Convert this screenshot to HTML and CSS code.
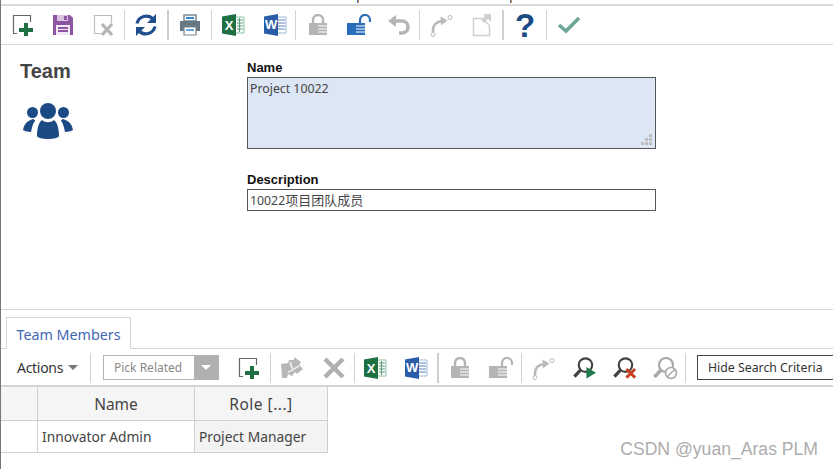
FILE: index.html
```html
<!DOCTYPE html>
<html lang="en">
<head>
<meta charset="utf-8">
<title>Team</title>
<link rel="stylesheet" href="styles.css">
</head>
<body>
<svg class="defs" aria-hidden="true">
  <symbol id="new" viewBox="0 0 24 24">
    <path d="M6 20.500H2.500V2.500H19.500V9" fill="none" stroke="currentColor" stroke-width="1.200"/>
    <path d="M13 11h4v5h5v4h-5v4h-4v-4H8v-4h5z" fill="#1f6f43" transform="translate(0 -1)"/>
  </symbol>
  <symbol id="excel" viewBox="0 0 24 24">
    <path d="M13 4h10v16H13z" fill="#fff" stroke="#8fbfa3"/>
    <path d="M16 7h6M16 10h6M16 13h6M16 16h6M18.500 5v14" stroke="#5f9e7c" stroke-width="1.200" fill="none"/>
    <path d="M1 3.500 15 1v22L1 20.500z" fill="#1e6f42"/>
  </symbol>
  <symbol id="word" viewBox="0 0 24 24">
    <path d="M13 4h10v16H13z" fill="#fff" stroke="#9db7db"/>
    <path d="M15 7h7M15 10h7M15 13h7M15 16h7" stroke="#5a83bf" stroke-width="1.200" fill="none"/>
    <path d="M1 3.500 15 1v22L1 20.500z" fill="#2b5ca8"/>
  </symbol>
  <symbol id="lock" viewBox="0 0 20 22">
    <path d="M5 9V6a5 5 0 0 1 10 0v3" fill="none" stroke="currentColor" stroke-width="2.400"/>
    <path d="M1 9h18v12H1z" fill="currentColor"/>
    <path d="M10 12h9M10 15h9M10 18h9" stroke="#fff" stroke-width="1.200"/>
  </symbol>
  <symbol id="unlock" viewBox="0 0 26 22">
    <path d="M14 9V6a5 5 0 0 1 10 0v2" fill="none" stroke="var(--shackle, currentColor)" stroke-width="2.200"/>
    <path d="M1 9h18v12H1z" fill="currentColor"/>
    <path d="M10 12h9M10 15h9M10 18h9" stroke="#fff" stroke-width="1.200"/>
  </symbol>
  <symbol id="arrow" viewBox="0 0 24 24">
    <path d="M4 19v-2c0-5 3-8 9-9" fill="none" stroke="currentColor" stroke-width="2.600"/>
    <path d="M11.500 3.500 18.500 7.500 12 12.500z" fill="currentColor"/>
    <circle cx="4" cy="21.500" r="2" fill="#fff" stroke="currentColor"/>
    <circle cx="21" cy="4.500" r="2" fill="#fff" stroke="currentColor"/>
  </symbol>
  <symbol id="lens" viewBox="0 0 26 24">
    <circle cx="14" cy="9" r="7" fill="none" stroke="currentColor" stroke-width="2.200"/>
    <path d="M9 14 2.500 21" stroke="currentColor" stroke-width="3.400"/>
  </symbol>
</svg>

<div class="page">
  <div class="topstrip"><span class="mark mark-a"></span><span class="mark mark-b"></span></div>

  <div class="toolbar main-bar">
    <span class="slot w40"><svg class="ic gray-d" width="24" height="24"><use href="#new"/></svg></span>
    <span class="slot w40"><svg width="22" height="22" viewBox="0 0 22 22"><path d="M1 1h17l3 3v17H1z" fill="#8e56a0"/><path d="M5 1h11v6H5z" fill="#d9c4e0"/><path d="M12 2h3v4h-3z" fill="#8e56a0"/><path d="M4 11h14v10H4z" fill="#f1e9f4"/><path d="M6 14h10M6 17h10" stroke="#8e56a0" stroke-width="2"/></svg></span>
    <span class="slot w41"><svg width="24" height="24" viewBox="0 0 24 24"><path d="M9 20.500H2.500V2.500H19.500V10" fill="none" stroke="#bdbdbd" stroke-width="1.200"/><path d="M10 11l10 11M20 11 10 22" stroke="#b5b5b5" stroke-width="3.200"/></svg></span>
    <span class="sep"></span>
    <span class="slot w42"><svg width="24" height="24" viewBox="0 0 24 24"><path d="M3 10.500A9.500 9.500 0 0 1 19 6" fill="none" stroke="#1f4e8c" stroke-width="3.200"/><path d="M22 1v9h-9z" fill="#1f4e8c"/><path d="M21 13.500A9.500 9.500 0 0 1 5 18" fill="none" stroke="#1f4e8c" stroke-width="3.200"/><path d="M2 23v-9h9z" fill="#1f4e8c"/></svg></span>
    <span class="sep wide"></span>
    <span class="slot w42"><svg width="22" height="22" viewBox="0 0 22 22"><path d="M5 1h12v6H5z" fill="#fff" stroke="#7b8894" stroke-width="1.500"/><path d="M7 4h8" stroke="#2f86d1" stroke-width="2"/><path d="M1 7h20v10H1z" fill="#667683"/><path d="M5 13h12v8H5z" fill="#fff" stroke="#7b8894" stroke-width="1.200"/><path d="M7 16h8" stroke="#2f86d1" stroke-width="1.500"/></svg></span>
    <span class="sep"></span>
    <span class="slot w42"><svg width="24" height="24" viewBox="0 0 24 24"><use href="#excel"/><text x="3.800" y="16.500" class="ltr">X</text></svg></span>
    <span class="slot w41"><svg width="24" height="24" viewBox="0 0 24 24"><use href="#word"/><text x="2" y="16" class="ltr">W</text></svg></span>
    <span class="sep"></span>
    <span class="slot w43"><svg class="ic gray-l" width="20" height="22"><use href="#lock"/></svg></span>
    <span class="slot w39"><svg class="ic blue-lock" width="26" height="22"><use href="#unlock"/></svg></span>
    <span class="slot w41"><svg width="22" height="20" viewBox="0 0 22 20"><path d="M5 6h9c8 0 8 12 0 12h-3" fill="none" stroke="#b5b5b5" stroke-width="3.600"/><path d="M8 0v12L0 6z" fill="#b5b5b5"/></svg></span>
    <span class="sep"></span>
    <span class="slot w41"><svg class="ic gray-xl" width="24" height="24"><use href="#arrow"/></svg></span>
    <span class="slot w41"><svg width="20" height="24" viewBox="0 0 20 24"><path d="M1.500 5.500h9l7 7v10h-16z" fill="#fff" stroke="#d0d0d0" stroke-width="1.500"/><path d="M11 1l8 0 0 8-3-3-4 4-3-3 4-4z" fill="#cfcfcf"/></svg></span>
    <span class="sep wide"></span>
    <span class="slot w42 help">?</span>
    <span class="sep"></span>
    <span class="slot w44"><svg width="24" height="18" viewBox="0 0 24 18"><path d="M2 9l7 6L22 2" fill="none" stroke="#6fa596" stroke-width="3.600"/></svg></span>
  </div>

  <main class="form-area">
    <div class="form-head">
      <h1 class="title">Team</h1>
      <svg class="team-ic" width="50" height="36" viewBox="0 0 50 36">
        <circle cx="25" cy="8" r="8" fill="#1c4a85"/>
        <circle cx="9.500" cy="9.500" r="5.500" fill="#1c4a85"/>
        <circle cx="40.500" cy="9.500" r="5.500" fill="#1c4a85"/>
        <path d="M14 33c0-8 2-14 5-16 3 3 9 3 12 0 3 2 5 8 5 16-1 4-21 4-22 0z" fill="#1c4a85"/>
        <path d="M0 27c1-6 4-9 10-11 1 0 2 1 2 2-2 2-3 6-4 11-3 0-6-1-8-2z" fill="#1c4a85"/>
        <path d="M50 27c-1-6-4-9-10-11-1 0-2 1-2 2 2 2 3 6 4 11 3 0 6-1 8-2z" fill="#1c4a85"/>
      </svg>
    </div>
    <div class="fields">
      <div class="label">Name</div>
      <div class="box name-box">Project 10022
        <svg class="grip" width="12" height="12" viewBox="0 0 12 12"><path d="M8 0h3v3H8zM4 4h3v3H4zM8 4h3v3H8zM0 8h3v3H0zM4 8h3v3H4zM8 8h3v3H8z" fill="#bdbdbd"/></svg>
      </div>
      <div class="label desc-label">Description</div>
      <div class="box desc-box">10022<span class="cjk">项目团队成员</span></div>
    </div>
  </main>

  <section class="lower">
    <div class="tabs"><span class="tab">Team Members</span></div>
    <div class="toolbar sub-bar">
      <span class="actions">Actions<i class="caret"></i></span>
      <span class="sep"></span>
      <span class="pick"><span class="pick-text">Pick Related</span><span class="pick-btn"><i class="caret white"></i></span></span>
      <span class="slot s-new"><svg class="ic gray-d" width="24" height="24"><use href="#new"/></svg></span>
      <span class="sep"></span>
      <span class="slot s-42"><svg width="24" height="24" viewBox="0 0 24 24"><path d="M1 8l7-1 1-3 5 0 0-3 7 5-2 3 4 4-6 5-2-2-3 4-4-2-1 4H2z" fill="#b8b8b8"/><path d="M10 6l3 8-5 2M14 13l5-3" stroke="#fff" stroke-width="1.200" fill="none"/></svg></span>
      <span class="slot s-41"><svg width="22" height="22" viewBox="0 0 22 22"><path d="M2 2l18 18M20 2 2 20" stroke="#b0b0b0" stroke-width="4.500"/></svg></span>
      <span class="sep"></span>
      <span class="slot s-40"><svg width="24" height="24" viewBox="0 0 24 24"><use href="#excel"/><text x="3.800" y="16.500" class="ltr">X</text></svg></span>
      <span class="slot s-42"><svg width="24" height="24" viewBox="0 0 24 24"><use href="#word"/><text x="2" y="16" class="ltr">W</text></svg></span>
      <span class="sep wide"></span>
      <span class="slot s-42"><svg class="ic gray-l" width="20" height="22"><use href="#lock"/></svg></span>
      <span class="slot s-40"><svg class="ic gray-l" width="26" height="22"><use href="#unlock"/></svg></span>
      <span class="sep"></span>
      <span class="slot s-42"><svg class="ic gray-xl" width="24" height="24"><use href="#arrow"/></svg></span>
      <span class="slot s-40"><svg class="ic dark" width="25" height="24" viewBox="0 0 26 24"><use href="#lens"/><path d="M15 11l10 6-10 6z" fill="#1f7a4d"/></svg></span>
      <span class="slot s-40"><svg class="ic dark" width="25" height="24" viewBox="0 0 26 24"><use href="#lens"/><path d="M15 13l9 9M24 13l-9 9" stroke="#c8401f" stroke-width="3"/></svg></span>
      <span class="slot s-41"><svg class="ic gray-m" width="26" height="24" viewBox="0 0 26 24"><use href="#lens"/><circle cx="19" cy="17" r="5.500" fill="#fff" stroke="#a8a8a8" stroke-width="1.500"/><path d="M15 21l8-8" stroke="#a8a8a8" stroke-width="1.500"/></svg></span>
      <span class="sep"></span>
      <span class="hide-btn">Hide Search Criteria</span>
    </div>

    <div class="grid">
      <div class="cell head"></div>
      <div class="cell head col">Name</div>
      <div class="cell head col role-head">Role [...]</div>
      <div class="cell"></div>
      <div class="cell body">Innovator Admin</div>
      <div class="cell body role">Project Manager</div>
    </div>
    <div class="watermark">CSDN @yuan_Aras PLM</div>
  </section>
</div>
</body>
</html>
```
FILE: styles.css
```css
* { box-sizing: border-box; }
html, body { margin: 0; padding: 0; height: 100%; overflow: hidden; background: #fff; }
body { font-family: "Noto Sans", "Noto Sans CJK SC", sans-serif; color: #444; }

.defs { width: 0; height: 0; display: block; overflow: hidden; }
.ltr { font: 700 13px "Liberation Sans", sans-serif; fill: #fff; }

.page { position: relative; height: 469px; width: 833px; border-left: 1px solid #777; display: flex; flex-direction: column; overflow: hidden; }

.topstrip { height: 6px; border-bottom: 2px solid #d9d9d9; display: flex; align-items: flex-start; flex: none; }
.mark { width: 2px; height: 3px; background: linear-gradient(90deg, #3d6fc0 50%, #d98a4a 50%); }
.mark-a { margin-left: 356px; }
.mark-b { margin-left: 151px; }

.toolbar { display: flex; align-items: center; flex: none; }
.main-bar { height: 39px; padding-left: 2px; border-bottom: 1px solid #d9d9d9; }

.slot { display: flex; align-items: center; justify-content: center; flex: none; height: 100%; }
.w39 { width: 39px; } .w40 { width: 40px; } .w41 { width: 41px; } .w42 { width: 42px; } .w43 { width: 43px; } .w44 { width: 44px; }
.s-40 { width: 40px; } .s-41 { width: 41px; } .s-42 { width: 42px; }

.sep { width: 1px; height: 30px; background: #d2d2d2; flex: none; }
.sep.wide { width: 2px; background: #cfcfcf; }

.ic { display: block; }
.gray-d { color: #666; }
.gray-l { color: #b5b5b5; }
.gray-xl { color: #b9b9b9; }
.gray-m { color: #a8a8a8; }
.dark { color: #444; }
.blue-lock { color: #2a6ebb; --shackle: #2a6ebb; }

.help { font: 700 33px/1 "Liberation Sans", sans-serif; color: #1c4a85; }

.form-area { display: flex; height: 265px; flex: none; border-bottom: 1px solid #d4d4d4; }
.form-head { width: 246px; flex: none; padding: 14px 0 0 19px; }
.title { margin: 0; font: 700 20px/24px "Liberation Sans", sans-serif; color: #444; }
.team-ic { display: block; margin: 20px 0 0 3px; }

.fields { width: 409px; flex: none; padding-top: 15px; }
.label { font: 700 13px/16px "Liberation Sans", sans-serif; color: #111; height: 17px; }
.desc-label { margin-top: 23px; }
.box { border: 1px solid #555; padding: 0 2px; font-size: 12.300px; line-height: 21px; color: #444; position: relative; }
.cjk { font-size: 13px; }
.name-box { height: 72px; background: #dde6f5; }
.desc-box { height: 22px; background: #fff; }
.grip { position: absolute; right: 2px; bottom: 2px; }

.lower { flex: 1; position: relative; min-height: 0; }
.tabs { height: 39px; display: flex; align-items: flex-end; padding-left: 5px; border-bottom: 1px solid #d4d4d4; }
.tab { height: 32px; width: 125px; margin-bottom: -1px; padding-top: 2px; border: 1px solid #d4d4d4; border-bottom-color: #fff; background: #fff; display: flex; align-items: center; justify-content: center; font-size: 14.300px; color: #3f66b5; }

.sub-bar { height: 38px; padding-top: 1px; border-bottom: 2px solid #d4d4d4; }
.actions { width: 89px; padding-left: 16px; display: flex; align-items: center; font-size: 14px; color: #333; letter-spacing: -0.300px; flex: none; }
.caret { display: inline-block; margin-left: 5px; border: 5px solid transparent; border-top-color: #777; border-bottom-width: 0; }
.caret.white { border-top-color: #fff; margin: 0; }
.pick { width: 116px; height: 25px; margin-left: 12px; border: 1px solid #b3b3b3; display: flex; flex: none; }
.pick-text { flex: 1; font-size: 12px; line-height: 23px; color: #8a8a8a; padding-left: 10px; }
.pick-btn { width: 24px; background: #b0b0b0; display: flex; align-items: center; justify-content: center; }
.s-new { width: 42px; margin-left: 9px; }
.hide-btn { width: 140px; height: 25px; margin-left: 11px; border: 1px solid #444; font-size: 12.300px; line-height: 23px; padding-left: 10px; color: #333; flex: none; white-space: nowrap; }

.grid { display: grid; grid-template-columns: 37px 157px 133px; grid-template-rows: 34px 32px; width: 327px; }
.cell { border-right: 1px solid #cfcfcf; border-bottom: 1px solid #cfcfcf; }
.head { background: #f5f5f5; }
.col { font-size: 15.500px; line-height: 35px; text-align: center; color: #444; }
.role-head { letter-spacing: 0.500px; }
.body { font-size: 13.800px; line-height: 32px; padding-left: 4px; color: #444; white-space: nowrap; }
.role { background: #f3f3f3; padding-left: 4px; }

.watermark { position: absolute; right: 15px; bottom: 10px; font: 17.600px/20px "Liberation Sans", sans-serif; color: #adadad; white-space: nowrap; }
```
